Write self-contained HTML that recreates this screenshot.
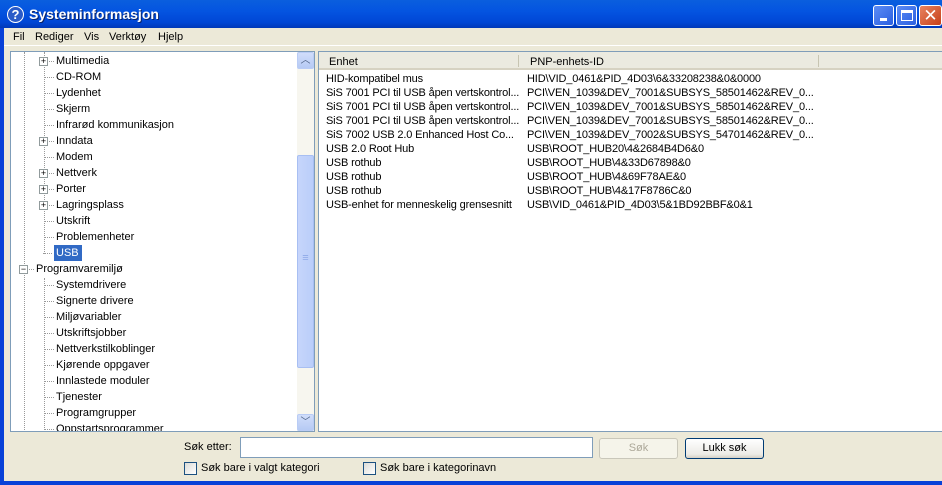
<!DOCTYPE html>
<html><head><style>
*{margin:0;padding:0;box-sizing:border-box}
body{width:942px;height:485px;overflow:hidden;background:#ECE9D8;font-family:"Liberation Sans",sans-serif;font-size:11px;color:#000;position:relative}
.a{position:absolute;white-space:nowrap}
#title{left:0;top:0;width:942px;height:28px;background:linear-gradient(#0A5FDE,#0454E0 40%,#0046D5 80%,#0038B8);}
#lb{left:0;top:28px;width:4px;height:457px;background:#0841D8}
#bb{left:0;top:481px;width:942px;height:4px;background:#0841D8}
.tb{top:5px;width:21px;height:21px;border:1px solid #fff;border-radius:3px;background:linear-gradient(135deg,#5C8CF5,#2B5FE0)}
.pane{background:#fff;border:1px solid #7F9DB9}
.cb{width:13px;height:13px;border:1px solid #1C5180;background:linear-gradient(135deg,#DCDCD7,#fff)}
.pb{width:9px;height:9px;border:1px solid #919B9C;background:#fff;font-size:9px;line-height:7px;text-align:center}
.r{position:absolute;left:56px;height:16px;line-height:16px;white-space:nowrap}
.r::before{content:"";position:absolute;left:-11px;top:8px;width:9px;border-top:1px dotted #999}
.lst{letter-spacing:-0.15px}
</style></head><body>
<div class="a" id="title"></div>
<div class="a" style="left:7px;top:6px;width:17px;height:17px;border-radius:50%;background:#2A5BC8;border:1px solid #fff;color:#fff;font-weight:bold;font-size:13px;text-align:center;line-height:15px">?</div>
<div class="a" style="left:29px;top:6px;color:#fff;font-weight:bold;font-size:14px;text-shadow:1px 1px #0A246A">Systeminformasjon</div>
<div class="a tb" style="left:873px"><div class="a" style="left:6px;top:12px;width:7px;height:3px;background:#fff"></div></div>
<div class="a tb" style="left:896px"><div class="a" style="left:4px;top:4px;width:12px;height:11px;border:1px solid #fff;border-top-width:3px"></div></div>
<div class="a tb" style="left:919px;width:23px;background:linear-gradient(135deg,#E8835F,#C6401A);color:#fff;font-size:17px;text-align:center;line-height:19px">✕</div>
<div class="a" id="lb"></div><div class="a" id="bb"></div>
<div class="a" style="left:4px;top:45px;width:938px;height:1px;background:#fff"></div>
<div class="a" style="left:13px;top:31px">Fil</div>
<div class="a" style="left:35px;top:31px">Rediger</div>
<div class="a" style="left:84px;top:31px">Vis</div>
<div class="a" style="left:109px;top:31px">Verktøy</div>
<div class="a" style="left:158px;top:31px">Hjelp</div>

<div class="a pane" style="left:10px;top:51px;width:305px;height:381px;overflow:hidden">
 <div class="a" style="left:13px;top:0;height:380px;border-left:1px dotted #999"></div>
 <div class="a" style="left:33px;top:0;height:202px;border-left:1px dotted #999;"></div>
 <div class="a" style="left:33px;top:226px;height:160px;border-left:1px dotted #999;"></div>
</div>
<div class="a" style="left:297px;top:52px;width:17px;height:379px;background:#F7F6EF"></div>
<div class="a" style="left:297px;top:52px;width:17px;height:17px;border:1px solid #B9CCF5;border-radius:2px;background:linear-gradient(#D0DDFA,#B6CAF4);color:#4D6185;font-size:10px;text-align:center;line-height:15px">︿</div>
<div class="a" style="left:297px;top:414px;width:17px;height:17px;border:1px solid #B9CCF5;border-radius:2px;background:linear-gradient(#D0DDFA,#B6CAF4);color:#4D6185;font-size:10px;text-align:center;line-height:15px">﹀</div>
<div class="a" style="left:297px;top:155px;width:17px;height:213px;border:1px solid #A8BFF2;border-radius:2px;background:linear-gradient(90deg,#C6D5FB,#BACEFA);color:#8EA9E8;text-align:center;line-height:205px">≡</div>

<div style="position:absolute;left:0;top:0;width:297px;height:431px;overflow:hidden">
<div class="r" style="top:53px">Multimedia</div>
<div class="r" style="top:69px">CD-ROM</div>
<div class="r" style="top:85px">Lydenhet</div>
<div class="r" style="top:101px">Skjerm</div>
<div class="r" style="top:117px">Infrarød kommunikasjon</div>
<div class="r" style="top:133px">Inndata</div>
<div class="r" style="top:149px">Modem</div>
<div class="r" style="top:165px">Nettverk</div>
<div class="r" style="top:181px">Porter</div>
<div class="r" style="top:197px">Lagringsplass</div>
<div class="r" style="top:213px">Utskrift</div>
<div class="r" style="top:229px">Problemenheter</div>
<div class="r" style="top:245px;left:54px;width:28px;background:#316AC5;color:#fff;padding-left:2px">USB</div>
<div class="r" style="top:261px;left:36px">Programvaremiljø</div>
<div class="r" style="top:277px">Systemdrivere</div>
<div class="r" style="top:293px">Signerte drivere</div>
<div class="r" style="top:309px">Miljøvariabler</div>
<div class="r" style="top:325px">Utskriftsjobber</div>
<div class="r" style="top:341px">Nettverkstilkoblinger</div>
<div class="r" style="top:357px">Kjørende oppgaver</div>
<div class="r" style="top:373px">Innlastede moduler</div>
<div class="r" style="top:389px">Tjenester</div>
<div class="r" style="top:405px">Programgrupper</div>
<div class="r" style="top:421px">Oppstartsprogrammer</div>
<div class="a pb" style="left:39px;top:57px">+</div>
<div class="a pb" style="left:39px;top:137px">+</div>
<div class="a pb" style="left:39px;top:169px">+</div>
<div class="a pb" style="left:39px;top:185px">+</div>
<div class="a pb" style="left:39px;top:201px">+</div>
<div class="a pb" style="left:19px;top:265px">−</div>
</div>

<div class="a pane" style="left:318px;top:51px;width:630px;height:381px"></div>
<div class="a" style="left:319px;top:52px;width:623px;height:18px;background:#EBEAE0;border-bottom:2px solid #D6D2C2"></div>
<div class="a" style="left:518px;top:55px;width:1px;height:12px;background:#C7C5B2"></div>
<div class="a" style="left:818px;top:55px;width:1px;height:12px;background:#C7C5B2"></div>
<div class="a" style="left:329px;top:56px">Enhet</div>
<div class="a" style="left:530px;top:56px">PNP-enhets-ID</div>
<div class="a lst" style="left:326px;top:72px;line-height:14px">HID-kompatibel mus<br>SiS 7001 PCI til USB åpen vertskontrol...<br>SiS 7001 PCI til USB åpen vertskontrol...<br>SiS 7001 PCI til USB åpen vertskontrol...<br>SiS 7002 USB 2.0 Enhanced Host Co...<br>USB 2.0 Root Hub<br>USB rothub<br>USB rothub<br>USB rothub<br>USB-enhet for menneskelig grensesnitt</div>
<div class="a lst" style="left:527px;top:72px;line-height:14px">HID\VID_0461&amp;PID_4D03\6&amp;33208238&amp;0&amp;0000<br>PCI\VEN_1039&amp;DEV_7001&amp;SUBSYS_58501462&amp;REV_0...<br>PCI\VEN_1039&amp;DEV_7001&amp;SUBSYS_58501462&amp;REV_0...<br>PCI\VEN_1039&amp;DEV_7001&amp;SUBSYS_58501462&amp;REV_0...<br>PCI\VEN_1039&amp;DEV_7002&amp;SUBSYS_54701462&amp;REV_0...<br>USB\ROOT_HUB20\4&amp;2684B4D6&amp;0<br>USB\ROOT_HUB\4&amp;33D67898&amp;0<br>USB\ROOT_HUB\4&amp;69F78AE&amp;0<br>USB\ROOT_HUB\4&amp;17F8786C&amp;0<br>USB\VID_0461&amp;PID_4D03\5&amp;1BD92BBF&amp;0&amp;1</div>

<div class="a" style="left:184px;top:441px">Søk etter:</div>
<div class="a" style="left:240px;top:437px;width:353px;height:21px;background:#fff;border:1px solid #7F9DB9"></div>
<div class="a" style="left:599px;top:438px;width:79px;height:21px;border:1px solid #C9C7BA;border-radius:3px;background:#F5F4EA;color:#ACA899;text-align:center;line-height:19px">Søk</div>
<div class="a" style="left:685px;top:438px;width:79px;height:21px;border:1px solid #003C74;border-radius:3px;background:linear-gradient(#fff,#ECEBE6 80%,#D6D0C5);text-align:center;line-height:19px">Lukk søk</div>
<div class="a cb" style="left:184px;top:462px"></div>
<div class="a" style="left:201px;top:462px">Søk bare i valgt kategori</div>
<div class="a cb" style="left:363px;top:462px"></div>
<div class="a" style="left:380px;top:462px">Søk bare i kategorinavn</div>
</body></html>
